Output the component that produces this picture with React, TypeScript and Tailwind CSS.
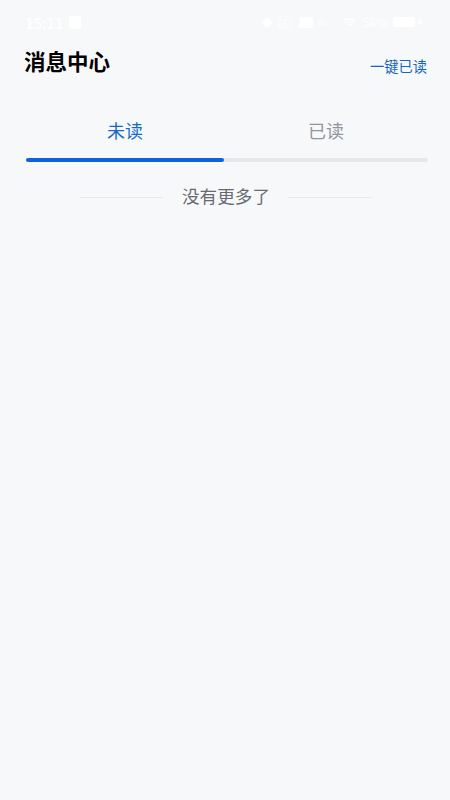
import { Wifi, Zap } from "lucide-react";

export default function App() {
  return (
    <div className="flex h-[800px] w-[450px] flex-col overflow-hidden bg-[#f7f8fa] font-['Noto_Sans_CJK_SC','Noto_Sans',sans-serif]">
      <div className="flex h-[44px] items-center justify-between pl-[25px] pr-[26px] text-white">
        <div className="flex items-center gap-[5px]">
          <span className="text-[15px] font-medium leading-none">15:11</span>
          <span className="h-[13px] w-[12px] rounded-[3px] bg-white" />
        </div>
        <div className="flex items-center">
          <svg width="12" height="13" viewBox="0 0 12 13" fill="white">
            <path d="M6 0.5 11.5 6.5 6 12.5 0.5 6.5Z" />
          </svg>
          <span className="ml-[1px] w-[22px] text-center text-[7px] leading-[8px]">4.20 KB/s</span>
          <span className="ml-[3px] h-[11px] w-[14px] rounded-[2px] bg-white" />
          <span className="ml-[5px] w-[17px] text-[7px] leading-none">5G</span>
          <Wifi className="ml-[8px]" size={13} strokeWidth={2.5} />
          <span className="ml-[7px] text-[12px] leading-none">58%</span>
          <span className="ml-[6px] h-[10px] w-[22px] rounded-[3px] bg-white" />
          <Zap className="ml-[2px]" size={7} fill="white" />
        </div>
      </div>

      <div className="flex items-center justify-between pl-[24px] pr-[23px] pt-[1px]">
        <h1 className="text-[21.5px] font-bold leading-[32px] text-black">消息中心</h1>
        <button className="pt-[9px] text-[14.25px] leading-[20px] text-[#1565c0]">一键已读</button>
      </div>

      <div className="mt-[38px] pl-[26px] pr-[22px]">
        <div className="flex">
          <div className="w-[198px] text-center text-[18px] leading-[30px] text-[#1769c9]">未读</div>
          <div className="flex-1 text-center text-[18px] leading-[30px] text-[#8f959e]">已读</div>
        </div>
        <div className="mt-[13px] h-[4px] rounded-full bg-[#e5e8eb]">
          <div className="h-full w-[198px] rounded-full bg-[#0f62dc]" />
        </div>
      </div>

      <div className="mt-[21px] flex items-center pl-[80px]">
        <div className="mt-[2px] h-px w-[83px] bg-[#e6e8ea]" />
        <span className="ml-[19px] text-[17.6px] leading-[26px] text-[#666a70]">没有更多了</span>
        <div className="ml-[18px] mt-[2px] h-px w-[84px] bg-[#e6e8ea]" />
      </div>
    </div>
  );
}
